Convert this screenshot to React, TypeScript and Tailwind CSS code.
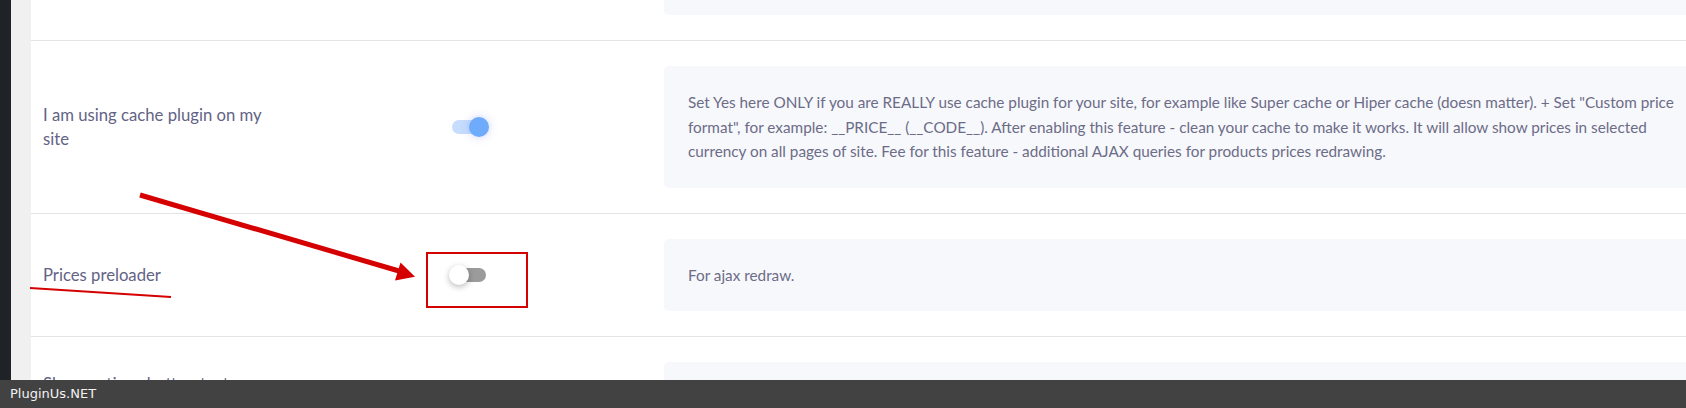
const rowGrid = "grid grid-cols-[260px_373px_1050px] items-center border-b border-[#e4e4e8]";

const Toggle = ({ on }: { on: boolean }) => (
  <div className={`relative h-[14px] w-[34px] rounded-full ${on ? "bg-[#c6ddfd]" : "bg-[#9b9b9b]"}`}>
    {on ? (
      <div className="absolute -top-[3px] left-[17px] size-5 rounded-full bg-[#6eabfa] shadow-[0_0_8px_rgba(110,120,250,0.35)]" />
    ) : (
      <div className="absolute -top-[3px] -left-[3px] size-5 rounded-full bg-white shadow-[0_2px_6px_rgba(0,0,0,0.28)]" />
    )}
  </div>
);

type Setting = {
  label: string;
  on: boolean;
  description: string;
};

const settings: Setting[] = [
  {
    label: "I am using cache plugin on my site",
    on: true,
    description:
      'Set Yes here ONLY if you are REALLY use cache plugin for your site, for example like Super cache or Hiper cache (doesn matter). + Set "Custom price format", for example: __PRICE__ (__CODE__). After enabling this feature - clean your cache to make it works. It will allow show prices in selected currency on all pages of site. Fee for this feature - additional AJAX queries for products prices redrawing.',
  },
  {
    label: "Prices preloader",
    on: false,
    description: "For ajax redraw.",
  },
  {
    label: "Show options button text on the mobile",
    on: false,
    description: "Show text of the options button.",
  },
];

export default function App() {
  return (
    <div className="relative flex h-[408px] w-[1686px] overflow-hidden bg-white font-['Lato',sans-serif]">
      <div className="w-[11px] shrink-0 bg-[#1f2327]" />
      <div className="w-[20px] shrink-0 bg-[#f0f0f1]" />

      <div className="flex min-w-0 flex-1 flex-col">
        {/* previous row, scrolled off the top */}
        <div className={`${rowGrid} pb-[25px]`}>
          <div />
          <div />
          <div className="h-[15px] rounded-b-[5px] bg-[#f7f8fc]" />
        </div>

        {settings.map((s, i) => (
          <div key={s.label} className={`${rowGrid} py-[25px]`}>
            <div className={`pl-[12px] pr-[20px] text-[16.7px] leading-[24px] text-[#636385] ${i === 2 ? "-mt-[5px]" : ""}`}>
              {s.label}
            </div>
            <div className="pl-[161px]">
              <Toggle on={s.on} />
            </div>
            <div className="rounded-[5px] bg-[#f7f8fc] px-[24px] py-[24px] text-[15.3px] leading-[24.5px] text-[#6c6c87]">
              {s.description}
            </div>
          </div>
        ))}
      </div>

      {/* annotations drawn over the screenshot */}
      <svg className="pointer-events-none absolute inset-0" width="1686" height="408">
        <line x1="140" y1="195" x2="399" y2="271" stroke="#d50000" strokeWidth="5" />
        <polygon points="415,276.7 395,280.5 400.5,262.5" fill="#d50000" />
        <line x1="30" y1="288" x2="171" y2="297" stroke="#d50000" strokeWidth="2" />
        <rect x="427" y="253" width="100" height="54" fill="none" stroke="#d50000" strokeWidth="2" />
      </svg>

      <div className="absolute inset-x-0 bottom-0 flex h-[28px] items-center bg-[#424242] pl-[10px] font-['DejaVu_Sans',sans-serif] text-[13px] text-[#f2f2f2]">
        PluginUs.NET
      </div>
    </div>
  );
}
